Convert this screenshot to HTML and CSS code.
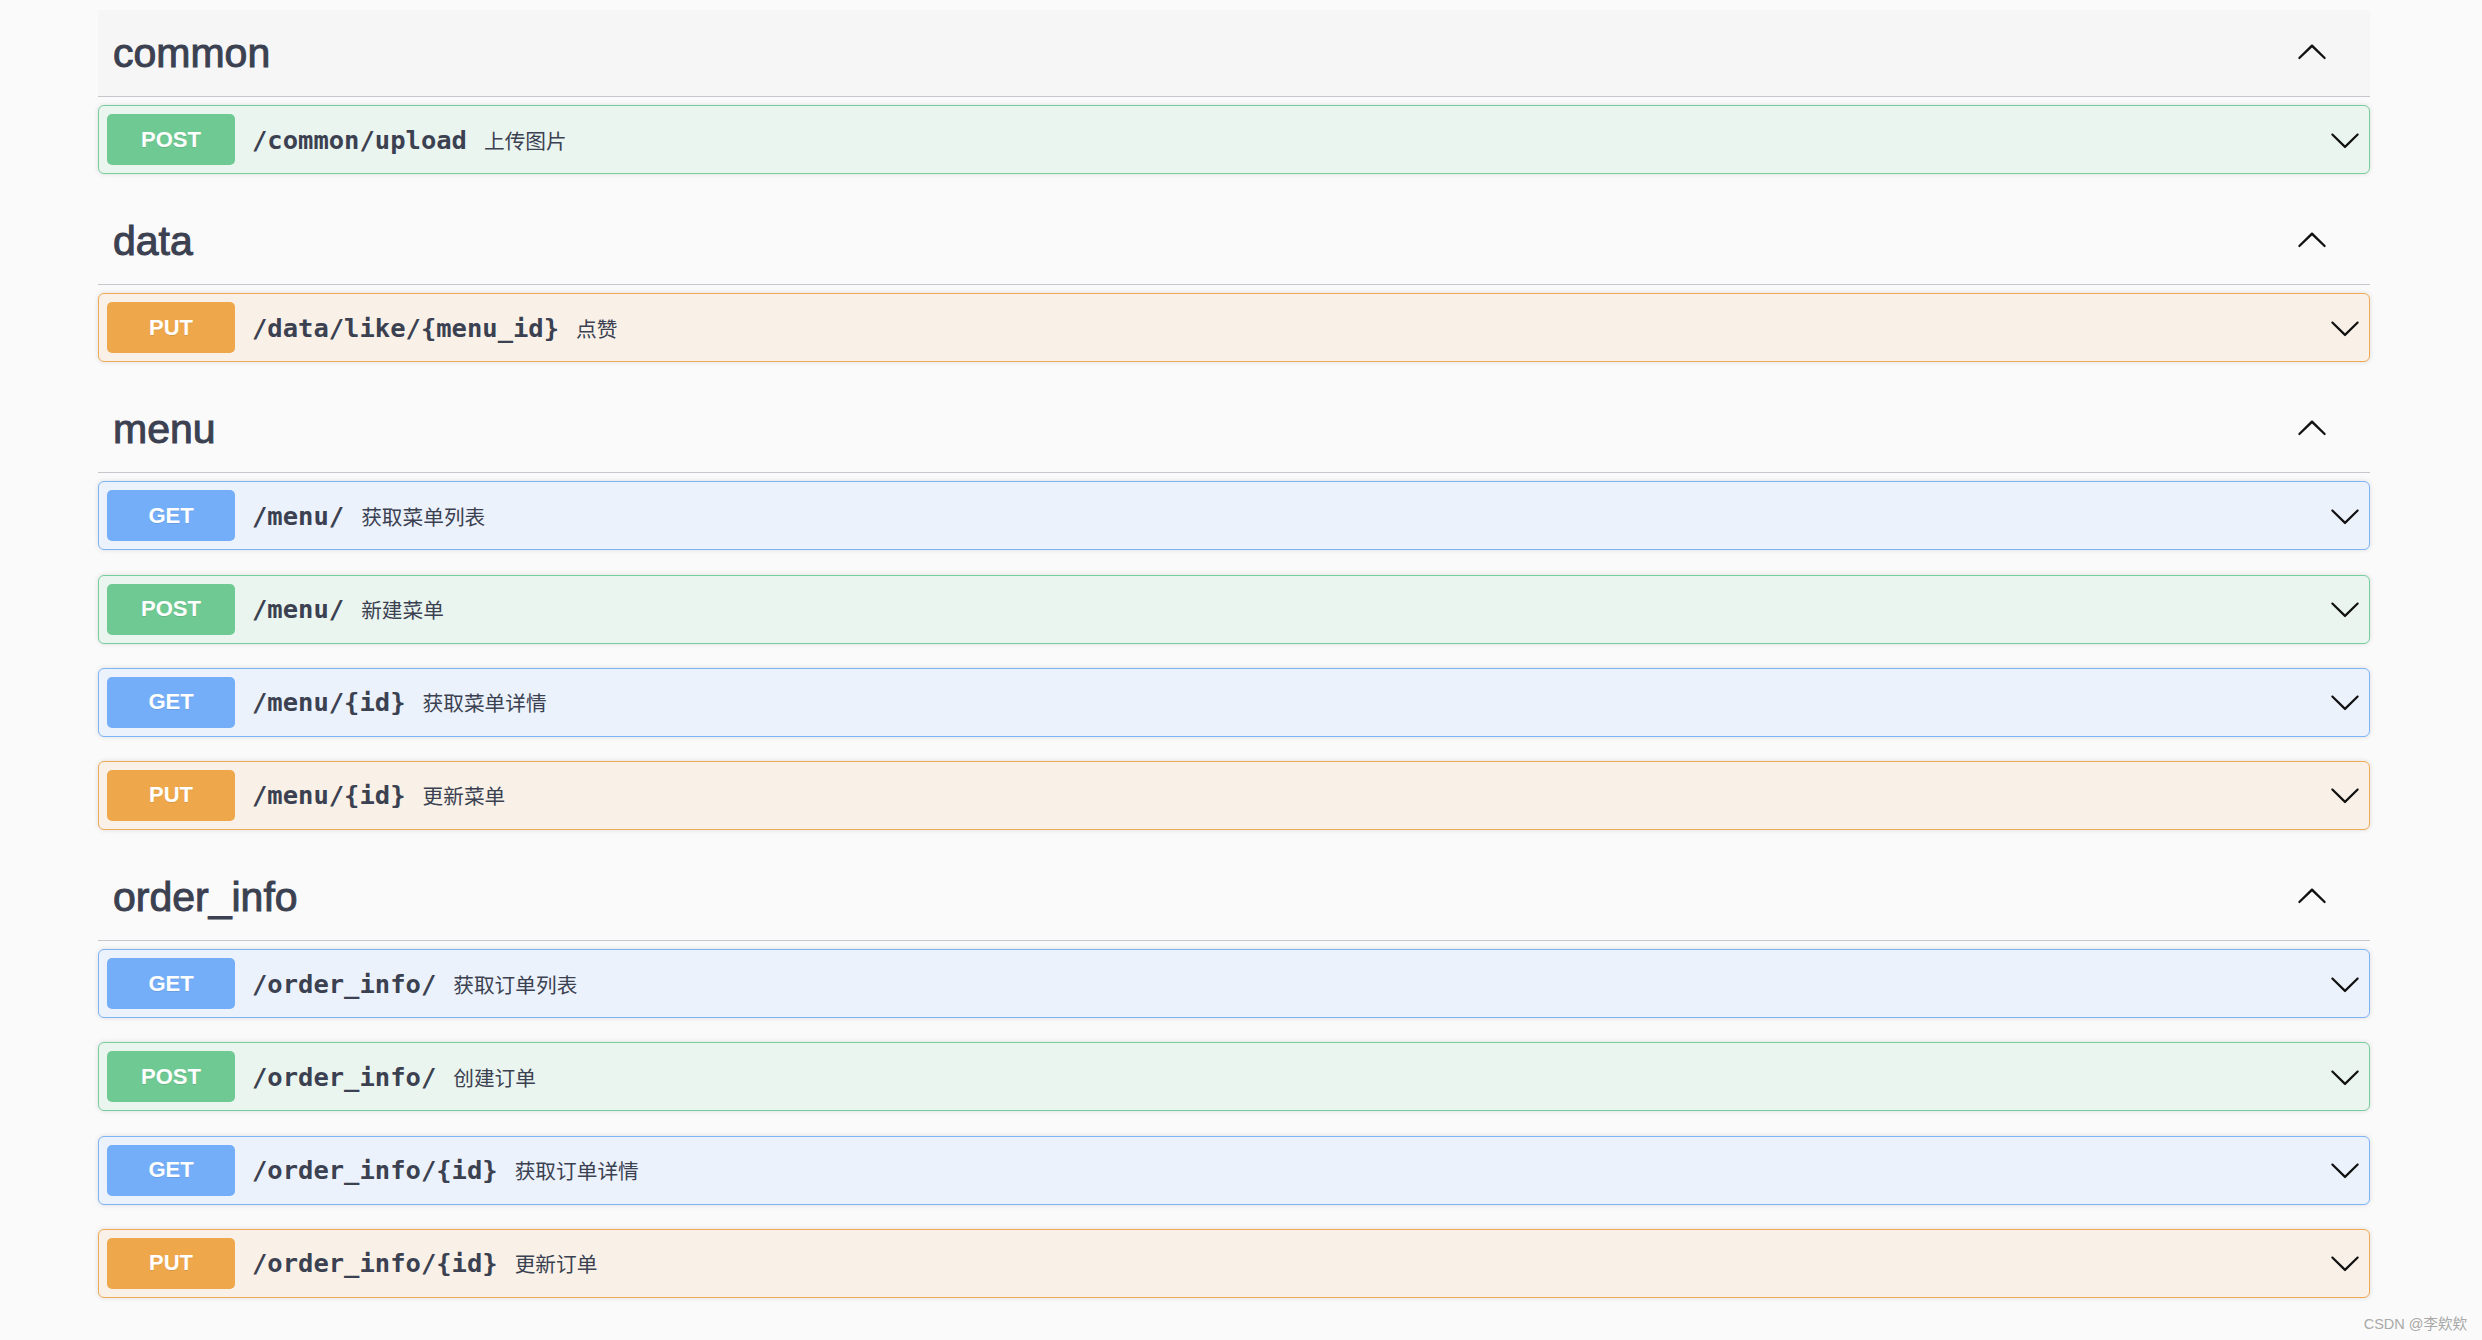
FILE: index.html
```html
<!DOCTYPE html>
<html lang="zh-CN">
<head>
<meta charset="utf-8">
<title>Swagger UI</title>
<link rel="stylesheet" href="styles.css">
</head>
<body>
<svg class="defs" width="0" height="0" aria-hidden="true">
  <defs>
    <path id="arrow-down" d="M17.418 6.109c.272-.268.709-.268.979 0s.271.701 0 .969l-7.908 7.83c-.27.268-.707.268-.979 0l-7.908-7.830c-.27-.268-.27-.701 0-.969.271-.268.709-.268.979 0L10 13.25l7.418-7.141z"/>
    <path id="arrow-up" d="M17.418 14.908c.272.268.709.268.979 0s.271-.701 0-.969l-7.908-7.83c-.27-.268-.707-.268-.979 0l-7.908 7.83c-.27.268-.27.701 0 .969.271.268.709.268.979 0L10 7.767l7.418 7.141z"/>
  </defs>
</svg>
<main class="wrapper">
  <section class="tag-section">
    <div class="tag-header is-hover">
      <h3 class="tag-title">common</h3>
      <svg class="tag-arrow" viewBox="0 0 20 20"><use href="#arrow-up"/></svg>
    </div>
    <div class="op-list">
      <div class="opblock post">
        <span class="method">POST</span>
        <span class="path">/common/upload</span>
        <span class="desc">上传图片</span>
        <svg class="op-arrow" viewBox="0 0 20 20"><use href="#arrow-down"/></svg>
      </div>
    </div>
  </section>

  <section class="tag-section">
    <div class="tag-header">
      <h3 class="tag-title">data</h3>
      <svg class="tag-arrow" viewBox="0 0 20 20"><use href="#arrow-up"/></svg>
    </div>
    <div class="op-list">
      <div class="opblock put">
        <span class="method">PUT</span>
        <span class="path">/data/like/{menu_id}</span>
        <span class="desc">点赞</span>
        <svg class="op-arrow" viewBox="0 0 20 20"><use href="#arrow-down"/></svg>
      </div>
    </div>
  </section>

  <section class="tag-section">
    <div class="tag-header">
      <h3 class="tag-title">menu</h3>
      <svg class="tag-arrow" viewBox="0 0 20 20"><use href="#arrow-up"/></svg>
    </div>
    <div class="op-list">
      <div class="opblock get">
        <span class="method">GET</span>
        <span class="path">/menu/</span>
        <span class="desc">获取菜单列表</span>
        <svg class="op-arrow" viewBox="0 0 20 20"><use href="#arrow-down"/></svg>
      </div>
      <div class="opblock post">
        <span class="method">POST</span>
        <span class="path">/menu/</span>
        <span class="desc">新建菜单</span>
        <svg class="op-arrow" viewBox="0 0 20 20"><use href="#arrow-down"/></svg>
      </div>
      <div class="opblock get">
        <span class="method">GET</span>
        <span class="path">/menu/{id}</span>
        <span class="desc">获取菜单详情</span>
        <svg class="op-arrow" viewBox="0 0 20 20"><use href="#arrow-down"/></svg>
      </div>
      <div class="opblock put">
        <span class="method">PUT</span>
        <span class="path">/menu/{id}</span>
        <span class="desc">更新菜单</span>
        <svg class="op-arrow" viewBox="0 0 20 20"><use href="#arrow-down"/></svg>
      </div>
    </div>
  </section>

  <section class="tag-section">
    <div class="tag-header">
      <h3 class="tag-title">order_info</h3>
      <svg class="tag-arrow" viewBox="0 0 20 20"><use href="#arrow-up"/></svg>
    </div>
    <div class="op-list">
      <div class="opblock get">
        <span class="method">GET</span>
        <span class="path">/order_info/</span>
        <span class="desc">获取订单列表</span>
        <svg class="op-arrow" viewBox="0 0 20 20"><use href="#arrow-down"/></svg>
      </div>
      <div class="opblock post">
        <span class="method">POST</span>
        <span class="path">/order_info/</span>
        <span class="desc">创建订单</span>
        <svg class="op-arrow" viewBox="0 0 20 20"><use href="#arrow-down"/></svg>
      </div>
      <div class="opblock get">
        <span class="method">GET</span>
        <span class="path">/order_info/{id}</span>
        <span class="desc">获取订单详情</span>
        <svg class="op-arrow" viewBox="0 0 20 20"><use href="#arrow-down"/></svg>
      </div>
      <div class="opblock put">
        <span class="method">PUT</span>
        <span class="path">/order_info/{id}</span>
        <span class="desc">更新订单</span>
        <svg class="op-arrow" viewBox="0 0 20 20"><use href="#arrow-down"/></svg>
      </div>
    </div>
  </section>
</main>
<div class="watermark">CSDN @李欸欸</div>
</body>
</html>
```

FILE: styles.css
```css
html, body {
  margin: 0;
  padding: 0;
}
body {
  background: #fafafa;
  width: 2482px;
  height: 1340px;
  overflow: hidden;
  position: relative;
  font-family: "Liberation Sans", "Noto Sans CJK SC", sans-serif;
  color: #3b4151;
}
.defs {
  position: absolute;
  width: 0;
  height: 0;
}
.wrapper {
  padding: 10px 0 0 98px;
  width: 2272px;
}
.tag-section {
  display: flex;
  flex-direction: column;
}
.tag-header {
  height: 86px;
  border-bottom: 1px solid #c5c7cc;
  display: flex;
  align-items: center;
  padding: 0 42px 0 15px;
}
.tag-header.is-hover {
  background: #f6f6f6;
}
.tag-title {
  margin: 0;
  flex: 1;
  font-family: "Liberation Sans", sans-serif;
  font-size: 41px;
  font-weight: normal;
  color: #3b4151;
  -webkit-text-stroke: 1px #3b4151;
}
.tag-arrow {
  width: 32px;
  height: 32px;
  margin-bottom: 4px;
  fill: #111;
}
.op-list {
  display: flex;
  flex-direction: column;
  gap: 24.2px;
  padding: 8px 0 24.2px;
}
.opblock {
  height: 51px;
  padding: 8px 8px 8px 8px;
  border: 1px solid;
  border-radius: 6px;
  box-shadow: 0 0 5px rgba(0, 0, 0, 0.12);
  display: flex;
  align-items: center;
}
.opblock.post {
  background: #ebf5ef;
  border-color: #78cd9c;
}
.opblock.get {
  background: #ebf2fb;
  border-color: #7db3f7;
}
.opblock.put {
  background: #f9f1e7;
  border-color: #f0aa55;
}
.method {
  width: 128px;
  height: 51px;
  flex: none;
  border-radius: 5px;
  display: flex;
  align-items: center;
  justify-content: center;
  color: #fff;
  font-family: "Liberation Sans", sans-serif;
  font-weight: bold;
  font-size: 22px;
  text-shadow: 0 1px 0 rgba(0, 0, 0, 0.1);
}
.post .method {
  background: #6fc993;
}
.get .method {
  background: #74aef8;
}
.put .method {
  background: #efa74c;
}
.path {
  margin-left: 17px;
  font-family: "DejaVu Sans Mono", "Liberation Mono", monospace;
  font-weight: bold;
  font-size: 25.5px;
  color: #3b4151;
}
.desc {
  margin-left: 17px;
  flex: 1;
  font-family: "Noto Sans CJK SC", "Liberation Sans", sans-serif;
  font-size: 20.7px;
  color: #3b4151;
}
.op-arrow {
  width: 32px;
  height: 32px;
  flex: none;
  fill: #111;
}
.watermark {
  position: absolute;
  right: 15px;
  bottom: 7px;
  font-family: "Liberation Sans", "Noto Sans CJK SC", sans-serif;
  font-size: 14.5px;
  color: #a9a9a9;
}
```
